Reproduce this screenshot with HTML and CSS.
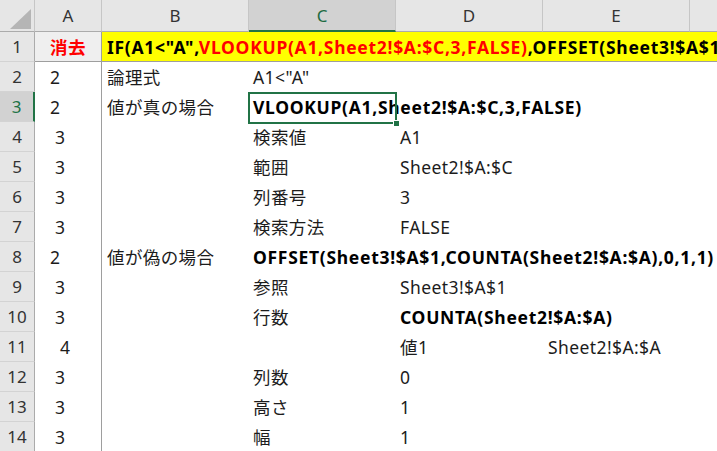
FILE: index.html
```html
<!DOCTYPE html>
<html lang="ja">
<head>
<meta charset="utf-8">
<title>Sheet</title>
<link rel="stylesheet" href="styles.css">
</head>
<body>
<div class="sheet">
  <div class="corner"><svg width="21" height="20" viewBox="0 0 21 20"><polygon points="21,0 21,20 0,20" fill="#b5b5b5"/></svg></div>
  <div class="ch">A</div>
  <div class="ch">B</div>
  <div class="ch active">C</div>
  <div class="ch">D</div>
  <div class="ch">E</div>
  <div class="ch last"></div>

  <div class="rh">1</div>
  <div class="cell col-a r1 a1">消去</div>
  <div class="cell r1 title">IF(A1&lt;"A",<span class="red">VLOOKUP(A1,Sheet2!$A:$C,3,FALSE)</span>,OFFSET(Sheet3!$A$1,COUNTA(Sheet2!$A:$A),0,1,1))</div>

  <div class="rh">2</div>
  <div class="cell col-a lv2">2</div>
  <div class="cell col-b">論理式</div>
  <div class="cell col-c">A1&lt;"A"</div>

  <div class="rh active">3</div>
  <div class="cell col-a lv2">2</div>
  <div class="cell col-b">値が真の場合</div>
  <div class="cell col-c sel bold">VLOOKUP(A1,Sheet2!$A:$C,3,FALSE)</div>

  <div class="rh">4</div>
  <div class="cell col-a lv3">3</div>
  <div class="cell col-c">検索値</div>
  <div class="cell col-d">A1</div>

  <div class="rh">5</div>
  <div class="cell col-a lv3">3</div>
  <div class="cell col-c">範囲</div>
  <div class="cell col-d">Sheet2!$A:$C</div>

  <div class="rh">6</div>
  <div class="cell col-a lv3">3</div>
  <div class="cell col-c">列番号</div>
  <div class="cell col-d">3</div>

  <div class="rh">7</div>
  <div class="cell col-a lv3">3</div>
  <div class="cell col-c">検索方法</div>
  <div class="cell col-d">FALSE</div>

  <div class="rh">8</div>
  <div class="cell col-a lv2">2</div>
  <div class="cell col-b">値が偽の場合</div>
  <div class="cell col-c bold">OFFSET(Sheet3!$A$1,COUNTA(Sheet2!$A:$A),0,1,1)</div>

  <div class="rh">9</div>
  <div class="cell col-a lv3">3</div>
  <div class="cell col-c">参照</div>
  <div class="cell col-d">Sheet3!$A$1</div>

  <div class="rh">10</div>
  <div class="cell col-a lv3">3</div>
  <div class="cell col-c">行数</div>
  <div class="cell col-d bold">COUNTA(Sheet2!$A:$A)</div>

  <div class="rh">11</div>
  <div class="cell col-a lv4">4</div>
  <div class="cell col-d">値1</div>
  <div class="cell col-e">Sheet2!$A:$A</div>

  <div class="rh">12</div>
  <div class="cell col-a lv3">3</div>
  <div class="cell col-c">列数</div>
  <div class="cell col-d">0</div>

  <div class="rh">13</div>
  <div class="cell col-a lv3">3</div>
  <div class="cell col-c">高さ</div>
  <div class="cell col-d">1</div>

  <div class="rh">14</div>
  <div class="cell col-a lv3">3</div>
  <div class="cell col-c">幅</div>
  <div class="cell col-d">1</div>
</div>
</body>
</html>
```
FILE: styles.css
```css
html, body {
  margin: 0;
  padding: 0;
  background: #fff;
}
body {
  width: 717px;
  height: 451px;
  overflow: hidden;
  font-family: "Noto Sans", "Noto Sans CJK JP", sans-serif;
}
.sheet {
  display: grid;
  grid-template-columns: 35px 67px 147px 147px 147px 147px 1fr;
  grid-template-rows: 32px;
  grid-auto-rows: 30px;
}
.sheet > div {
  box-sizing: border-box;
}
.corner {
  background: #e6e6e6;
  border-right: 1px solid #c6c6c6;
  border-bottom: 1px solid #ababab;
  display: flex;
  align-items: flex-end;
  justify-content: flex-end;
  padding: 0 3px 2px 0;
}
.corner svg { display: block; }
.ch {
  background: #e6e6e6;
  border-right: 1px solid #c6c6c6;
  border-bottom: 1px solid #ababab;
  text-align: center;
  font-size: 17px;
  line-height: 31px;
  color: #333;
}
.ch.active {
  background: #d2d2d2;
  color: #1f6b43;
  border-bottom: 2px solid #217346;
}
.ch.last { border-right: none; }
.rh {
  grid-column: 1;
  background: #e6e6e6;
  border-right: 1px solid #ababab;
  border-bottom: 1px solid #d3d3d3;
  text-align: center;
  font-size: 17px;
  line-height: 30px;
  color: #333;
}
.rh.active {
  background: #d2d2d2;
  color: #217346;
  border-right: 2px solid #217346;
}
.cell {
  font-size: 17.5px;
  letter-spacing: 0.4px;
  line-height: 29px;
  padding: 1px 0 0 4px;
  white-space: nowrap;
  color: #1c1c1c;
}
.col-a { grid-column: 2; border-right: 1px solid #9e9e9e; }
.col-b { grid-column: 3; padding-left: 5px; }
.col-c { grid-column: 4; }
.col-d { grid-column: 5; }
.col-e { grid-column: 6; padding-left: 5px; }
.lv2 { padding-left: 15px; }
.lv3 { padding-left: 20px; }
.lv4 { padding-left: 25px; }
.r1 { border-bottom: 1px solid #9e9e9e; }
.a1 {
  background: #efefef;
  color: #ff0000;
  font-weight: 700;
  text-align: center;
  padding-left: 0;
}
.title {
  grid-column: 3 / -1;
  background: #ffff00;
  font-weight: 700;
  letter-spacing: 0.7px;
  color: #000;
  overflow: hidden;
  padding-left: 5px;
}
.red { color: #ff0000; }
.bold { font-weight: 700; letter-spacing: 0.7px; color: #000; }
.sel { position: relative; }
.sel::after {
  content: "";
  position: absolute;
  left: -1px;
  top: 0;
  right: -1px;
  bottom: -2px;
  border: 2px solid #217346;
  z-index: 1;
}
.sel::before {
  content: "";
  position: absolute;
  right: -3px;
  bottom: -4px;
  width: 5px;
  height: 5px;
  background: #217346;
  box-shadow: 0 0 0 1px #fff;
  z-index: 2;
}
```
